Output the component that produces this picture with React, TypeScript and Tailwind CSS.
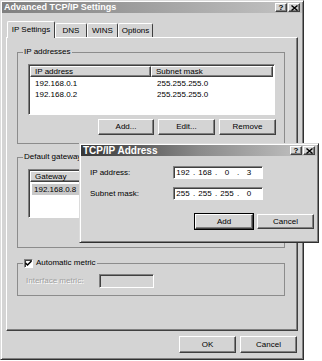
import type { ReactNode } from 'react';

const raised =
  'bg-[#d4d4d4] border border-t-white border-l-white border-r-[#404040] border-b-[#404040] shadow-[inset_-1px_-1px_0_#808080]';
const sunken =
  'border border-t-[#808080] border-l-[#808080] border-r-white border-b-white shadow-[inset_1px_1px_0_#404040]';

function Btn({ label, w, h = 'h-[16px]', isDefault }: { label: string; w: string; h?: string; isDefault?: boolean }) {
  return (
    <div className={`${w} ${h} ${isDefault ? 'outline outline-1 outline-black' : ''} ${raised} flex items-center justify-center text-[8px] leading-none`}>
      {label}
    </div>
  );
}

function TitleButtons() {
  return (
    <div className="flex items-center gap-[1px]">
      <div className={`w-[12px] h-[9px] ${raised} flex items-center justify-center text-[8px] font-bold leading-none`}>?</div>
      <div className={`w-[12px] h-[9px] ${raised} flex items-center justify-center`}>
        <svg width="7" height="6" viewBox="0 0 7 6">
          <path d="M0.5 0.5 L6.5 5.5 M6.5 0.5 L0.5 5.5" stroke="#000" strokeWidth="1.4" />
        </svg>
      </div>
    </div>
  );
}

function Header({ cols }: { cols: { label: string; w: string }[] }) {
  return (
    <div className="flex h-[11px]">
      {cols.map((c) => (
        <div key={c.label} className={`${c.w} ${raised} pl-[4px] flex items-center text-[8px] leading-none`}>
          {c.label}
        </div>
      ))}
    </div>
  );
}

function Group({ legend, h, children }: { legend: ReactNode; h: string; children: ReactNode }) {
  return (
    <fieldset className={`w-[268px] ${h} border border-[#8c8c8c] box-border`}>
      <legend className="ml-[5px] px-[1px] text-[8px] leading-[10px]">{legend}</legend>
      {children}
    </fieldset>
  );
}

function IpField({ parts }: { parts: string[] }) {
  return (
    <div className={`w-[90px] h-[13px] bg-white ${sunken} flex items-center text-[8px] leading-none`}>
      {parts.map((p, i) => (
        <div key={i} className="flex items-center">
          <span className="w-[18px] text-center">{p}</span>
          {i < 3 && <span className="w-[4px] text-center">.</span>}
        </div>
      ))}
    </div>
  );
}

export default function App() {
  return (
    <div className="w-[322px] h-[361px] bg-white relative font-['Liberation_Sans',Arial,sans-serif] text-black">
      {/* Main window */}
      <div className="w-[304px] h-[360px] bg-[#d4d4d4] border border-t-[#dcdcdc] border-l-[#dcdcdc] border-r-[#303030] border-b-[#303030] shadow-[inset_1px_1px_0_white,inset_-1px_-1px_0_#808080] p-[1px] flex flex-col">
        <div className="h-[11px] bg-gradient-to-r from-[#808080] to-[#c4c4c4] flex items-center justify-between pl-[2px] pr-[2px]">
          <span className="text-[9px] font-bold text-white leading-none">Advanced TCP/IP Settings</span>
          <TitleButtons />
        </div>

        {/* Tabs */}
        <div className="flex items-end ml-[5px] mt-[8px] h-[16px] text-[8px] leading-none">
          <div className="relative z-10 -mb-[1px] w-[48px] h-[17px] bg-[#d4d4d4] border border-b-0 border-t-white border-l-white border-r-[#404040] rounded-t-[2px] flex items-center justify-center pb-[1px]">
            IP Settings
          </div>
          <div className="w-[32px] h-[14px] border border-b-0 border-t-white border-l-white border-r-[#404040] rounded-t-[2px] flex items-center justify-center">DNS</div>
          <div className="w-[31px] h-[14px] border border-b-0 border-t-white border-l-white border-r-[#404040] rounded-t-[2px] flex items-center justify-center">WINS</div>
          <div className="w-[35px] h-[14px] border border-b-0 border-t-white border-l-white border-r-[#404040] rounded-t-[2px] flex items-center justify-center">Options</div>
        </div>

        {/* Tab panel */}
        <div className="ml-[4px] w-[292px] h-[294px] border border-t-white border-l-white border-r-[#404040] border-b-[#404040] shadow-[inset_-1px_-1px_0_#808080] pl-[10px] pt-[9px] flex flex-col text-[8px]">
          <Group legend="IP addresses" h="h-[97px]">
            <div className={`ml-[10px] mt-[7px] w-[247px] h-[51px] bg-white ${sunken} p-[1px]`}>
              <Header cols={[{ label: 'IP address', w: 'w-[122px]' }, { label: 'Subnet mask', w: 'w-[123px]' }]} />
              <div className="mt-[1px] flex flex-col leading-[11px]">
                <div className="flex"><span className="w-[122px] pl-[5px]">192.168.0.1</span><span className="pl-[5px]">255.255.255.0</span></div>
                <div className="flex"><span className="w-[122px] pl-[5px]">192.168.0.2</span><span className="pl-[5px]">255.255.255.0</span></div>
              </div>
            </div>
            <div className="mt-[4px] mr-[8px] flex justify-end gap-[4px]">
              <Btn label="Add..." w="w-[56px]" />
              <Btn label="Edit..." w="w-[57px]" />
              <Btn label="Remove" w="w-[57px]" />
            </div>
          </Group>

          <div className="mt-[8px]">
            <Group legend="Default gateways:" h="h-[96px]">
              <div className={`ml-[10px] mt-[7px] w-[247px] h-[49px] bg-white ${sunken} p-[1px]`}>
                <Header cols={[{ label: 'Gateway', w: 'w-[122px]' }, { label: 'Metric', w: 'w-[123px]' }]} />
                <div className="mt-[2px] ml-[2px] flex leading-[11px]">
                  <span className="w-[118px] pl-[2px] bg-[#c8c8c8]">192.168.0.8</span>
                  <span className="pl-[5px]">Automatic</span>
                </div>
              </div>
              <div className="mt-[4px] mr-[8px] flex justify-end gap-[4px]">
                <Btn label="Add..." w="w-[56px]" />
                <Btn label="Edit..." w="w-[57px]" />
                <Btn label="Remove" w="w-[57px]" />
              </div>
            </Group>
          </div>

          <div className="mt-[10px]">
            <Group
              h="h-[38px]"
              legend={
                <span className="flex items-center gap-[3px]">
                  <span className={`w-[9px] h-[9px] bg-white ${sunken} flex items-center justify-center`}>
                    <svg width="7" height="7" viewBox="0 0 7 7">
                      <path d="M0.5 3 L2.5 5 L6.5 1" stroke="#000" strokeWidth="1.5" fill="none" />
                    </svg>
                  </span>
                  Automatic metric
                </span>
              }
            >
              <div className="mt-[6px] pl-[8px] flex items-center">
                <span className="w-[73px] text-[#a0a0a0] [text-shadow:1px_1px_0_white]">Interface metric:</span>
                <div className={`w-[55px] h-[14px] bg-[#d4d4d4] ${sunken}`} />
              </div>
            </Group>
          </div>
        </div>

        {/* Bottom buttons */}
        <div className="mt-[5px] mr-[5px] flex justify-end gap-[4px]">
          <Btn label="OK" w="w-[57px]" h="h-[17px]" />
          <Btn label="Cancel" w="w-[57px]" h="h-[17px]" />
        </div>
      </div>

      {/* TCP/IP Address dialog (overlay) */}
      <div className="absolute left-[79px] top-[143px] w-[240px] h-[100px] bg-[#d4d4d4] border border-t-[#dcdcdc] border-l-[#dcdcdc] border-r-[#303030] border-b-[#303030] shadow-[inset_1px_1px_0_white,inset_-1px_-1px_0_#808080] p-[1px] flex flex-col">
        <div className="h-[11px] bg-gradient-to-r from-[#383838] via-[#8a8a8a] to-[#c8c8c8] flex items-center justify-between pl-[2px] pr-[2px]">
          <span className="text-[10px] font-bold text-white leading-none">TCP/IP Address</span>
          <TitleButtons />
        </div>
        <div className="pl-[9px] pt-[10px] flex flex-col gap-[8px] text-[8px]">
          <div className="flex items-center">
            <span className="w-[83px]">IP address:</span>
            <IpField parts={['192', '168', '0', '3']} />
          </div>
          <div className="flex items-center">
            <span className="w-[83px]">Subnet mask:</span>
            <IpField parts={['255', '255', '255', '0']} />
          </div>
        </div>
        <div className="mt-[14px] mr-[3px] flex justify-end gap-[4px]">
          <Btn label="Add" w="w-[58px]" h="h-[15px]" isDefault />
          <Btn label="Cancel" w="w-[57px]" h="h-[15px]" />
        </div>
      </div>
    </div>
  );
}
